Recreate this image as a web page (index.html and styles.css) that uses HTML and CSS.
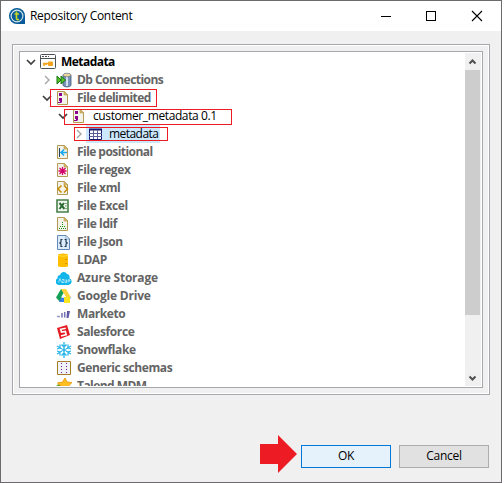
FILE: index.html
```html
<!DOCTYPE html>
<html lang="en">
<head>
<meta charset="utf-8">
<title>Repository Content</title>
<link rel="stylesheet" href="styles.css">
</head>
<body>
<svg class="defs" width="0" height="0" aria-hidden="true">
  <symbol id="open" viewBox="0 0 10 8"><path d="M1 2L5 6L9 2" fill="none" stroke="#404040" stroke-width="1.7"/></symbol>
  <symbol id="closed" viewBox="0 0 10 10"><path d="M3 1L7 5L3 9" fill="none" stroke="#a6a6a6" stroke-width="1.4"/></symbol>
  <symbol id="page" viewBox="0 0 16 16"><path d="M1.5 1.5H8L11.5 5V14.5H1.5Z" fill="#f4f3ea" stroke="#b39a55"/><path d="M8 1V5H12Z" fill="#d9b45e" stroke="#b39a55" stroke-width=".6"/></symbol>
  <symbol id="delim" viewBox="0 0 16 16"><use href="#page"/><path d="M3 3H6V6H3ZM3 8H6V12L5 13H2V12H4V11H3Z" fill="#8b008f"/></symbol>
</svg>
<div class="window">
  <header class="titlebar">
    <svg class="logo" viewBox="0 0 16 16"><path d="M8 0A8 8 0 1 0 8 16H16V8A8 8 0 0 0 8 0Z" fill="#075b98"/><circle cx="8" cy="8" r="5.9" fill="none" stroke="#dbe8ef" stroke-width="1.1"/><path d="M7.5 3.5V10.5Q7.5 12 10 11.5M5.5 6H10" fill="none" stroke="#c5d529" stroke-width="1.7"/></svg>
    <h1>Repository Content</h1>
    <svg class="controls" viewBox="0 0 102 12"><path d="M0 6.5H10" stroke="#000"/><rect x="45.5" y="1.5" width="9" height="9" fill="none" stroke="#000"/><path d="M91 1L101 11M101 1L91 11" stroke="#000" stroke-width="1.1"/></svg>
  </header>
  <main class="group">
    <div class="tree">
      <ul class="rows">
        <li class="row l0 dark"><svg class="chev"><use href="#open"/></svg><svg class="icon" viewBox="0 0 16 16"><rect x=".5" y=".5" width="15" height="14" rx="1" fill="#fff" stroke="#4c5158"/><path d="M1 4.5H15" stroke="#4c5158"/><path d="M2 2.5H4M5 2.5H7M8 2.5H9" stroke="#4c5158"/><path d="M3 9.5H10M4 9V12M6 9V11" stroke="#f5a21c" stroke-width="1.6"/><rect x="8" y="7.5" width="5" height="4.5" rx="1" fill="#f5a21c"/></svg><span class="tight">Metadata</span></li>
        <li class="row l1"><svg class="chev"><use href="#closed"/></svg><svg class="icon" viewBox="0 0 16 16"><path d="M7 3V13C7 15.5 15 15.5 15 13V3" fill="#7592b8" stroke="#3f5875" stroke-width=".8"/><path d="M11 4V14" stroke="#d4e0ed" stroke-width="2"/><ellipse cx="11" cy="3" rx="4" ry="1.8" fill="#ead397" stroke="#66768a" stroke-width=".7"/><path d="M1 4L5 8L1 12ZM5 4L9.5 8L5 12Z" fill="#57c32a" stroke="#187410"/></svg><span class="tight">Db Connections</span></li>
        <li class="row l1"><svg class="chev"><use href="#open"/></svg><svg class="icon"><use href="#delim"/></svg><span class="tight">File delimited</span></li>
        <li class="row l2 dark regular"><svg class="chev"><use href="#open"/></svg><svg class="icon"><use href="#delim"/></svg><span>customer_metadata 0.1</span></li>
        <li class="row l3 dark regular"><svg class="chev"><use href="#closed"/></svg><span class="selected"><svg class="icon" viewBox="0 0 16 16"><path d="M1.5 3.5H13.5V13.5H1.5Z" fill="#fff" stroke="#18186f"/><path d="M1 3.5H14" stroke="#18186f" stroke-width="2"/><path d="M1 7.5H14M1 10.5H14M5.5 4V13M9.5 4V13" stroke="#5b5b9c"/></svg><span class="tight">metadata</span></span></li>
        <li class="row l1"><i class="chev"></i><svg class="icon" viewBox="0 0 16 16"><use href="#page"/><path d="M3.5 4V13" stroke="#25435f"/><path d="M11 8.5H5M8 5.5L5 8.5L8 11.5" fill="none" stroke="#18a8ef" stroke-width="1.6"/></svg><span class="tight">File positional</span></li>
        <li class="row l1"><i class="chev"></i><svg class="icon" viewBox="0 0 16 16"><use href="#page"/><path d="M6.5 5V13M2.5 9H10.5M3.5 6L9.5 12M9.5 6L3.5 12" stroke="#d4006a" stroke-width="1.3"/></svg><span>File regex</span></li>
        <li class="row l1"><i class="chev"></i><svg class="icon" viewBox="0 0 16 16"><use href="#page"/><path d="M5.5 5.5L2 9L5.5 12.5M8 5.5L11.5 9L8 12.5" fill="none" stroke="#c58b05" stroke-width="1.5"/></svg><span>File xml</span></li>
        <li class="row l1"><i class="chev"></i><svg class="icon" viewBox="0 0 16 16"><path d="M1 2H12V14H1Z" fill="#f1f7ef" stroke="#477f48" stroke-width="1.6"/><path d="M3.5 5L8.5 11M8 5L3.5 11" stroke="#2b6933" stroke-width="2"/><path d="M8.5 5.5H11M9 8H11M8.5 10.5H11" stroke="#7aa97e"/></svg><span>File Excel</span></li>
        <li class="row l1"><i class="chev"></i><svg class="icon" viewBox="0 0 16 16"><use href="#page"/><path d="M6 6h1v1H6zM6 8h1v1H6zM4 10h1v1H4zM6 10h1v1H6zM8 10h1v1H8zM3 12h1v1H3zM5 12h1v1H5zM7 12h1v1H7zM9 12h1v1H9z" fill="#159315"/></svg><span>File ldif</span></li>
        <li class="row l1"><i class="chev"></i><svg class="icon" viewBox="0 0 16 16"><path d="M1.5 1.5H10L13.5 5V15.5H1.5Z" fill="#dcecfa" stroke="#6589b6"/><path d="M10 1.5V5H13.5Z" fill="#fff" stroke="#6589b6" stroke-width=".7"/><path d="M6.5 5.5H5V8L3.8 9L5 10V12.5H6.5M8.5 5.5H10V8L11.2 9L10 10V12.5H8.5" fill="none" stroke="#243c56" stroke-width="1.2"/></svg><span>File Json</span></li>
        <li class="row l1"><i class="chev"></i><svg class="icon" viewBox="0 0 16 16"><path d="M2 3Q2 1.5 7 1.5T12 3V14Q12 15 7 15T2 14Z" fill="#ffbd00"/><path d="M2 3.5Q7 5 12 3.5" fill="none" stroke="#ffe04a"/><path d="M9 7.5H11M9 11.5H11" stroke="#d68d00"/></svg><span>LDAP</span></li>
        <li class="row l1"><i class="chev"></i><svg class="icon" viewBox="0 0 16 16"><path d="M3 15A3.5 3.5 0 0 1 1.5 8.4Q1 5.5 4 5A3.8 3.8 0 0 1 11 4Q14 4.2 13.5 8.3A3.5 3.5 0 0 1 12.5 15Z" fill="#12b5ea"/><path d="M2.5 12.5L4 8.5L5.5 12.5M6 9.5H8L6 12.5H8M9 9.5V12.5H10.5V9.5M12 12.5V10Q13 9 14 10V11H12" fill="none" stroke="#d7f4ff" stroke-width=".7"/></svg><span class="wide">Azure Storage</span></li>
        <li class="row l1"><i class="chev"></i><svg class="icon" viewBox="0 0 16 16"><path d="M5 1H10L4 14L0 9.5Z" fill="#159f57"/><path d="M5 1H10L15 9.5H10Z" fill="#ffd23f"/><path d="M5.5 9.5H15L12 14H3Z" fill="#397ee8"/><path d="M7.5 5L5 9.5H10Z" fill="#fff"/><path d="M8 9H14V15H8Z" fill="#f8e520"/></svg><span class="wide">Google Drive</span></li>
        <li class="row l1"><i class="chev"></i><svg class="icon" viewBox="0 0 16 16"><path d="M1 10.5H4" stroke="#9997c9" stroke-width="1.5"/><path d="M6 7V11.5M8.7 6V11.5" stroke="#7671b4" stroke-width="1.5"/><path d="M11 5H14L12.5 12H10.5Z" fill="#6059a6"/></svg><span>Marketo</span></li>
        <li class="row l1"><i class="chev"></i><svg class="icon" viewBox="0 0 16 16"><path d="M1 4L11 1L14 11L4 15Z" fill="#e61b22"/><path d="M9.8 4.2L4.7 5.3L5.5 8L9.3 7.5L10.2 10.6L5 12" fill="none" stroke="#fff" stroke-width="1.6"/></svg><span>Salesforce</span></li>
        <li class="row l1"><i class="chev"></i><svg class="icon" viewBox="0 0 16 16"><path d="M8 0V6M8 10V16M1 4L6 7M10 9L15 12M15 4L10 7M6 9L1 12M5.5 2.5L8 5L10.5 2.5M5.5 13.5L8 11L10.5 13.5M1 7L4 6L4 2.5M15 7L12 6V2.5M1 9L4 10V13.5M15 9L12 10V13.5M6.7 8L8 6.7L9.3 8L8 9.3Z" fill="none" stroke="#29b5e8" stroke-width="1.3"/></svg><span>Snowflake</span></li>
        <li class="row l1"><i class="chev"></i><svg class="icon" viewBox="0 0 16 16"><path d="M1.5 1.5H14.5V14.5H1.5Z" fill="#eef2fb" stroke="#a67d20"/><path d="M5.5 3V14M10.5 3V14" stroke="#7d158b" stroke-dasharray="1 2"/></svg><span>Generic schemas</span></li>
        <li class="row l1"><i class="chev"></i><svg class="icon" viewBox="0 0 16 16"><circle cx="4" cy="10" r="4" fill="#62a51b"/><path d="M9 0L11 4L16 4.5L12.5 8L13 13L8.5 11L4 13L5 8L1.5 5L6.5 4Z" fill="#ffbf23" stroke="#f0a018"/></svg><span class="tight">Talend MDM</span></li>
      </ul>
      <div class="scrollbar">
        <svg class="arrow" viewBox="0 0 16 17"><path d="M4.5 10.5L7.5 7.5L10.5 10.5" fill="none" stroke="#505050" stroke-width="2"/></svg>
        <div class="thumb"></div>
        <svg class="arrow" viewBox="0 0 16 17"><path d="M4.5 7.5L7.5 10.5L10.5 7.5" fill="none" stroke="#505050" stroke-width="2"/></svg>
      </div>
      <div class="mark mark-folder"></div>
      <div class="mark mark-file"></div>
      <div class="mark mark-table"></div>
    </div>
  </main>
  <footer class="actions">
    <svg class="pointer" viewBox="0 0 38 38"><path d="M0 9H18V0L37 19L18 38V29H0Z" fill="#ed1c24"/></svg>
    <button class="ok">OK</button>
    <button>Cancel</button>
  </footer>
</div>
</body>
</html>
```
FILE: styles.css
```css
* { box-sizing: border-box; }
body { margin: 0; background: #fff; font: 12px/18px "Open Sans", sans-serif; color: #000; overflow: hidden; }
.defs { position: absolute; }
.window { display: flex; flex-direction: column; width: 502px; height: 483px; border: 1px solid #6c6a6c; background: #f0f0f0; }
.titlebar { display: flex; align-items: center; height: 30px; flex: none; padding: 0 18px 0 8px; background: #fff; }
.logo { width: 16px; height: 16px; }
h1 { flex: 1; margin: 0 0 0 5px; font-size: 12px; font-weight: 400; letter-spacing: -.3px; }
.controls { width: 102px; height: 12px; }
.group { width: 478px; height: 351px; flex: none; margin: 13px 0 0 11px; padding: 5px; border: 1px solid #a5a9ae; outline: 1px solid #fff; outline-offset: -2px; display: flex; justify-content: center; align-items: center; }
.tree { position: relative; display: flex; width: 464px; height: 337px; flex: none; padding: 1px 1px 1px 0; border: 1px solid #a5a9ae; background: #fff; }
.rows { flex: 1; height: 333px; overflow: hidden; margin: 0; padding: 0; list-style: none; }
.row { display: flex; align-items: center; height: 18px; font-weight: 700; color: #646464; white-space: nowrap; letter-spacing: -.4px; }
.tight { letter-spacing: -.55px; }
.wide { letter-spacing: -.2px; }
.dark { color: #000; }
.regular { font-weight: 400; }
.l0 { padding-left: 6px; }
.l1 { padding-left: 22px; }
.l2 { padding-left: 38px; }
.l3 { padding-left: 54px; }
.chev { width: 10px; height: 10px; margin-right: 4px; flex: none; }
.icon { width: 16px; height: 16px; margin-right: 5px; flex: none; }
.selected { display: flex; align-items: center; width: 74px; height: 18px; margin-left: -2px; padding-left: 2px; background: #cce8ff; }
.scrollbar { display: flex; flex-direction: column; width: 16px; height: 333px; background: #f0f0f0; }
.arrow { width: 16px; height: 17px; flex: none; }
.thumb { width: 15px; height: 245px; margin-bottom: auto; background: #cdcdcd; }
.mark { position: absolute; border: 1px solid #ed1c24; }
.mark-folder { left: 30px; top: 37px; width: 107px; height: 18px; }
.mark-file { left: 44px; top: 57px; width: 168px; height: 16px; }
.mark-table { left: 54px; top: 75px; width: 94px; height: 14px; }
.actions { display: flex; align-items: center; justify-content: flex-end; gap: 8px; margin-top: 40px; padding-right: 12px; }
.pointer { width: 38px; height: 38px; margin-right: -5px; }
button { width: 90px; height: 23px; margin: 4px 0 0; padding: 0; border: 1px solid #adadad; background: #e1e1e1; font: 12px/20px "Open Sans", sans-serif; letter-spacing: -.3px; color: #000; }
.ok { border-color: #0078d7; background: #e5f1fb; }
```
